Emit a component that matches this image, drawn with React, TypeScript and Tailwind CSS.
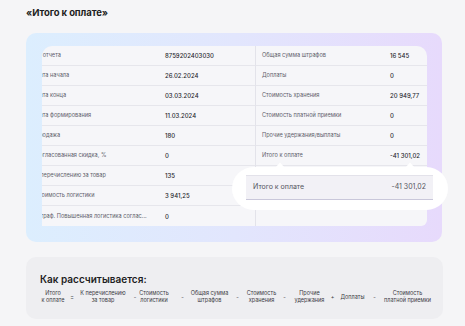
const leftRows = [
  ['№ отчета', '8759202403030'],
  ['Дата начала', '26.02.2024'],
  ['Дата конца', '03.03.2024'],
  ['Дата формирования', '11.03.2024'],
  ['Продажа', '180'],
  ['Согласованная скидка, %', '0'],
  ['К перечислению за товар', '135'],
  ['Стоимость логистики', '3 941,25'],
  ['Штраф. Повышенная логистика соглас...', '0'],
]

const rightRows = [
  ['Общая сумма штрафов', '16 545'],
  ['Доплаты', '0'],
  ['Стоимость хранения', '20 949,77'],
  ['Стоимость платной приемки', '0'],
  ['Прочие удержания/выплаты', '0'],
  ['Итого к оплате', '-41 301,02'],
]

// slot widths keep every term centred where the reference has it
const formula: [string, string, number][] = [
  ['Итого', 'к оплате', 26],
  ['=', '', 12],
  ['К перечислению', 'за товар', 50],
  ['-', '', 14],
  ['Стоимость', 'логистики', 24],
  ['-', '', 33],
  ['Общая сумма', 'штрафов', 21],
  ['-', '', 35],
  ['Стоимость', 'хранения', 13],
  ['-', '', 33],
  ['Прочие', 'удержания', 17],
  ['+', '', 29],
  ['Доплаты', '', 11],
  ['-', '', 33],
  ['Стоимость', 'платной приемки', 33],
]

function Notch({ className }: { className: string }) {
  return (
    <svg className={className} width="10" height="6" viewBox="0 0 10 6">
      <path d="M0 6 L5 0.5 L10 6 Z" fill="#ffffff" />
    </svg>
  )
}

export default function App() {
  return (
    <div className="h-[326px] w-[465px] overflow-hidden bg-[#f5f5f7] font-['Inter',sans-serif] text-[#2b2b31]">
      <h1 className="pl-[26px] pt-[7px] text-[9.5px] font-bold leading-[12px] tracking-[-0.1px] text-[#1d1d22]">
        «Итого к оплате»
      </h1>

      <div className="relative ml-[26px] mt-[14px] h-[209px] w-[416px] rounded-[10px] bg-gradient-to-r from-[#dceefe] via-[#e2e6fd] to-[#e7dafc] pl-[16px] pt-[13px]">
        <div className="flex h-[180px] w-[385px] overflow-hidden rounded-tl-[10px] rounded-tr-[10px] rounded-br-[6px] bg-[#f6f6f9]">
          <div className="w-[214px] border-r border-[#e3e3ea]">
            {leftRows.map(([label, value], i) => (
              <div
                key={label}
                className={`flex h-[20px] items-center ${i < leftRows.length - 1 ? 'border-b border-[#e6e6ec]' : ''}`}
              >
                <div className="-ml-[7px] w-[130px] shrink-0 whitespace-nowrap text-[5.6px] text-[#60606a]">
                  {label}
                </div>
                <div className="text-[6px] font-medium text-[#27272d]">{value}</div>
              </div>
            ))}
          </div>
          <div className="w-[171px]">
            {rightRows.map(([label, value]) => (
              <div key={label} className="flex h-[20px] items-center border-b border-[#e6e6ec] pl-[6px]">
                <div className="w-[128px] shrink-0 whitespace-nowrap text-[5.6px] text-[#60606a]">{label}</div>
                <div className="text-[6px] font-medium text-[#27272d]">{value}</div>
              </div>
            ))}
          </div>
        </div>

        <div className="absolute left-[206px] top-[134px] h-[43px] w-[216px] rounded-full bg-white pl-[14px] pt-[8px]">
          <Notch className="absolute left-[43px] top-[-5px]" />
          <Notch className="absolute left-[173px] top-[-5px]" />
          <div className="flex h-[25px] w-[187px] items-center justify-between border-b border-t border-b-[#c9c7da] border-t-[#e3e2ea] bg-[#f2f1f6] px-[7px] text-[7px] text-[#55555e]">
            <span>Итого к оплате</span>
            <span>-41 301,02</span>
          </div>
        </div>
      </div>

      <div className="ml-[26px] mt-[15px] h-[62px] w-[417px] rounded-[10px] bg-[#eeeef1] pl-[14px] pt-[16px]">
        <h2 className="text-[10px] font-semibold leading-[12px] text-[#1d1d22]">Как рассчитывается:</h2>
        <div className="mt-[5px] flex items-center">
          {formula.map(([a, b, w], i) => (
            <div key={i} className="flex justify-center" style={{ width: w }}>
              <div className="whitespace-nowrap text-center text-[5.5px] leading-[7px] text-[#3a3a42]">
                {a}
                {b && <br />}
                {b}
              </div>
            </div>
          ))}
        </div>
      </div>
    </div>
  )
}
